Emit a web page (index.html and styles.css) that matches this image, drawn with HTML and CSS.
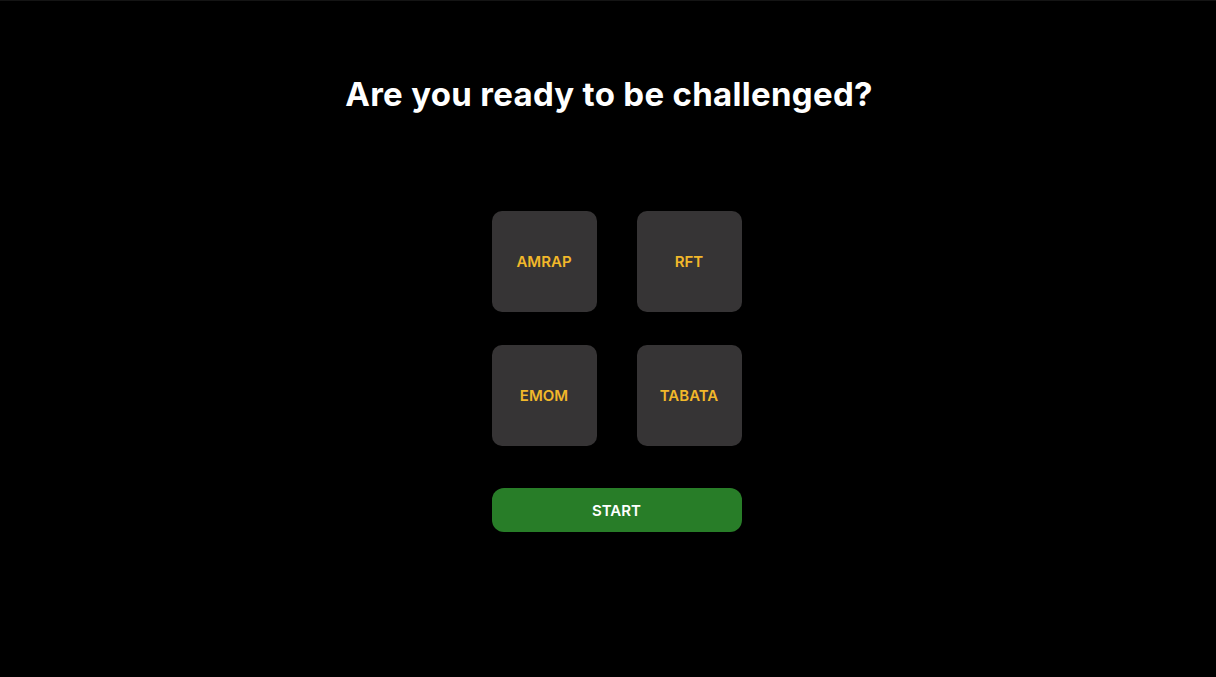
FILE: index.html
```html
<!DOCTYPE html>
<html lang="en">
<head>
<meta charset="utf-8">
<title>Challenge</title>
<link rel="stylesheet" href="styles.css">
</head>
<body>
<main class="page">
  <h1 class="title">Are you ready to be challenged?</h1>
  <section class="panel">
    <div class="grid">
      <button class="tile">AMRAP</button>
      <button class="tile">RFT</button>
      <button class="tile">EMOM</button>
      <button class="tile">TABATA</button>
    </div>
    <button class="start">START</button>
  </section>
</main>
</body>
</html>
```

FILE: styles.css
```css
html, body {
  margin: 0;
  padding: 0;
  background: #000;
}
body {
  border-top: 1px solid #141414;
  height: 676px;
  overflow: hidden;
  font-family: Inter, "Liberation Sans", sans-serif;
  color: #fff;
}
.page {
  display: flex;
  flex-direction: column;
  align-items: center;
}
.title {
  margin: 73px 0 0 2px;
  font-size: 33px;
  line-height: 40px;
  font-weight: 700;
  letter-spacing: 0.3px;
}
.panel {
  margin-top: 97px;
  padding-left: 17px;
  display: flex;
  flex-direction: column;
  gap: 42px;
}
.grid {
  display: grid;
  grid-template-columns: 105px 105px;
  column-gap: 40px;
  row-gap: 33px;
}
.tile {
  width: 105px;
  height: 101px;
  border: none;
  border-radius: 10px;
  background: #363435;
  color: #f2b82a;
  font-family: Inter, "Liberation Sans", sans-serif;
  font-size: 15px;
  font-weight: 600;
  padding: 0;
}
.start {
  width: 250px;
  height: 44px;
  border: none;
  border-radius: 12px;
  background: #287d28;
  color: #fff;
  font-family: Inter, "Liberation Sans", sans-serif;
  font-size: 15px;
  font-weight: 600;
  padding: 0;
}
```
